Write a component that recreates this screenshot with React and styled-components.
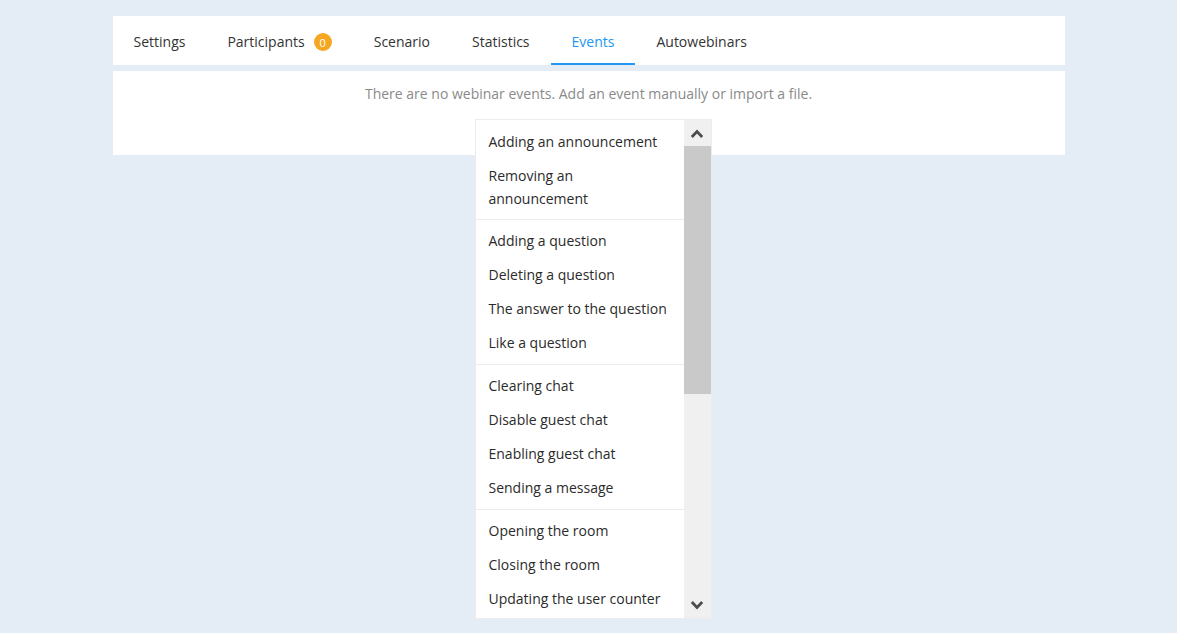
import styled, { createGlobalStyle } from "styled-components";

const GlobalStyle = createGlobalStyle`
  html, body {
    margin: 0;
    padding: 0;
    background: #e4ecf5;
    font-family: "Open Sans", "Noto Sans", sans-serif;
  }
`;

const Page = styled.div`
  box-sizing: border-box;
  width: 952px;
  min-height: 100vh;
  margin: 0 auto;
  padding-top: 16px;
  display: flex;
  flex-direction: column;
  gap: 6px;
`;

const TabBar = styled.nav`
  display: flex;
  height: 49px;
  background: #fff;
`;

const Tab = styled.div`
  display: flex;
  align-items: center;
  gap: 9px;
  padding: 3px 21px 0;
  font-size: 14px;
  color: ${(p) => (p.$active ? "#2196f3" : "#333")};
  border-bottom: 2px solid ${(p) => (p.$active ? "#2196f3" : "transparent")};
  cursor: pointer;
`;

const Badge = styled.span`
  width: 18px;
  height: 18px;
  border-radius: 50%;
  background: #f5a623;
  color: #fff;
  font-size: 11px;
  display: flex;
  align-items: center;
  justify-content: center;
  margin-top: 2px;
`;

const Panel = styled.section`
  position: relative;
  background: #fff;
  height: 84px;
`;

const Empty = styled.p`
  margin: 0;
  padding-top: 13px;
  text-align: center;
  font-size: 14px;
  color: #8a8a8a;
`;

const Dropdown = styled.div`
  position: absolute;
  z-index: 10;
  left: 363px;
  top: 49px;
  width: 235px;
  height: 498px;
  display: flex;
  background: #fff;
  box-shadow: 0 0 0 1px #ececec;
`;

const List = styled.div`
  flex: 1;
  overflow: hidden;
`;

const Group = styled.div`
  padding: ${(p) => (p.$first ? "5px 0 3px" : "4px 0")};
  border-top: ${(p) => (p.$first ? "none" : "1px solid #ebebeb")};
`;

const Item = styled.div`
  padding: 5px 13px 6px;
  font-size: 14px;
  line-height: 23px;
  color: #2b2b2b;
  white-space: ${(p) => (p.$wrap ? "normal" : "nowrap")};
  width: ${(p) => (p.$wrap ? "120px" : "auto")};
`;

const Scrollbar = styled.div`
  width: 27px;
  display: flex;
  flex-direction: column;
  background: #f0f0f0;
`;

const Arrow = styled.div`
  height: 26px;
  display: flex;
  align-items: center;
  justify-content: center;
`;

const Track = styled.div`
  flex: 1;
  display: flex;
  flex-direction: column;
`;

const Thumb = styled.div`
  height: 248px;
  background: #c9c9c9;
`;

const Chevron = ({ up }) => (
  <svg width="14" height="9" viewBox="0 0 14 9">
    <path
      d={up ? "M1.8 8 L7 2.6 L12.2 8" : "M1.8 1 L7 6.4 L12.2 1"}
      fill="none"
      stroke="#4d4d4d"
      strokeWidth="2.8"
    />
  </svg>
);

const groups = [
  [{ text: "Adding an announcement" }, { text: "Removing an announcement", wrap: true }],
  [
    { text: "Adding a question" },
    { text: "Deleting a question" },
    { text: "The answer to the question" },
    { text: "Like a question" },
  ],
  [
    { text: "Clearing chat" },
    { text: "Disable guest chat" },
    { text: "Enabling guest chat" },
    { text: "Sending a message" },
  ],
  [
    { text: "Opening the room" },
    { text: "Closing the room" },
    { text: "Updating the user counter" },
  ],
];

const tabs = ["Settings", "Participants", "Scenario", "Statistics", "Events", "Autowebinars"];

export default function App() {
  return (
    <>
      <GlobalStyle />
      <Page>
        <TabBar>
          {tabs.map((t) => (
            <Tab key={t} $active={t === "Events"}>
              {t}
              {t === "Participants" && <Badge>0</Badge>}
            </Tab>
          ))}
        </TabBar>
        <Panel>
          <Empty>There are no webinar events. Add an event manually or import a file.</Empty>
          <Dropdown>
            <List>
              {groups.map((g, i) => (
                <Group key={i} $first={i === 0}>
                  {g.map((it) => (
                    <Item key={it.text} $wrap={it.wrap}>
                      {it.text}
                    </Item>
                  ))}
                </Group>
              ))}
            </List>
            <Scrollbar>
              <Arrow>
                <Chevron up />
              </Arrow>
              <Track>
                <Thumb />
              </Track>
              <Arrow>
                <Chevron />
              </Arrow>
            </Scrollbar>
          </Dropdown>
        </Panel>
      </Page>
    </>
  );
}
